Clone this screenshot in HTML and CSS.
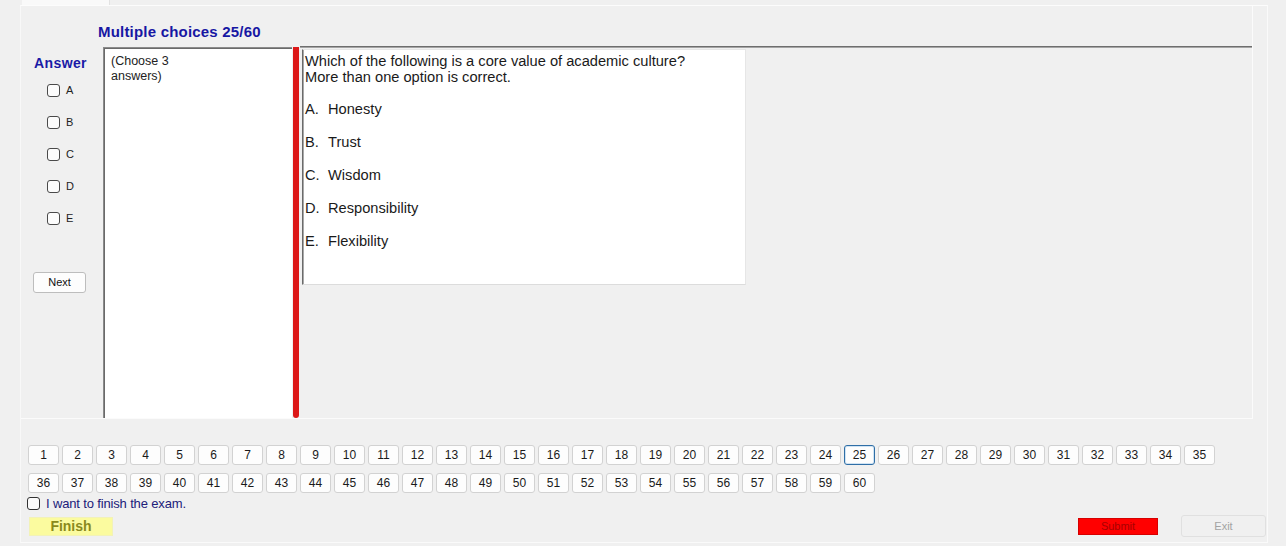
FILE: index.html
```html
<!DOCTYPE html>
<html>
<head>
<meta charset="utf-8">
<link rel="stylesheet" href="styles.css">
</head>
<body>
<div class="tabs"><div class="tab"></div></div>
<div class="page">
  <div class="group">
    <div class="title">Multiple choices 25/60</div>
    <div class="main">
      <div class="answers">
        <div class="answer-label">Answer</div>
        <div class="opt"><span class="cb"></span><span>A</span></div>
        <div class="opt"><span class="cb"></span><span>B</span></div>
        <div class="opt"><span class="cb"></span><span>C</span></div>
        <div class="opt"><span class="cb"></span><span>D</span></div>
        <div class="opt"><span class="cb"></span><span>E</span></div>
        <div class="next">Next</div>
      </div>
      <div class="choose">(Choose 3<br>answers)</div>
      <div class="redbar"></div>
      <div class="qarea">
        <div class="qbox">
          <div class="qline">Which of the following is a core value of academic culture?</div>
          <div class="qline">More than one option is correct.</div>
          <div class="option"><span class="letter">A.</span>Honesty</div>
          <div class="option"><span class="letter">B.</span>Trust</div>
          <div class="option"><span class="letter">C.</span>Wisdom</div>
          <div class="option"><span class="letter">D.</span>Responsibility</div>
          <div class="option"><span class="letter">E.</span>Flexibility</div>
        </div>
      </div>
    </div>
  </div>
  <div class="pager">
    <div class="prow">
      <div class="pb">1</div><div class="pb">2</div><div class="pb">3</div><div class="pb">4</div><div class="pb">5</div><div class="pb">6</div><div class="pb">7</div><div class="pb">8</div><div class="pb">9</div><div class="pb">10</div><div class="pb">11</div><div class="pb">12</div><div class="pb">13</div><div class="pb">14</div><div class="pb">15</div><div class="pb">16</div><div class="pb">17</div><div class="pb">18</div><div class="pb">19</div><div class="pb">20</div><div class="pb">21</div><div class="pb">22</div><div class="pb">23</div><div class="pb">24</div><div class="pb current">25</div><div class="pb">26</div><div class="pb">27</div><div class="pb">28</div><div class="pb">29</div><div class="pb">30</div><div class="pb">31</div><div class="pb">32</div><div class="pb">33</div><div class="pb">34</div><div class="pb">35</div>
    </div>
    <div class="prow">
      <div class="pb">36</div><div class="pb">37</div><div class="pb">38</div><div class="pb">39</div><div class="pb">40</div><div class="pb">41</div><div class="pb">42</div><div class="pb">43</div><div class="pb">44</div><div class="pb">45</div><div class="pb">46</div><div class="pb">47</div><div class="pb">48</div><div class="pb">49</div><div class="pb">50</div><div class="pb">51</div><div class="pb">52</div><div class="pb">53</div><div class="pb">54</div><div class="pb">55</div><div class="pb">56</div><div class="pb">57</div><div class="pb">58</div><div class="pb">59</div><div class="pb">60</div>
    </div>
  </div>
  <div class="finish-check"><span class="cb"></span><span>I want to finish the exam.</span></div>
  <div class="bottom">
    <div class="finish">Finish</div>
    <div class="spacer"></div>
    <div class="submit">Submit</div>
    <div class="exit">Exit</div>
  </div>
</div>
</body>
</html>
```

FILE: styles.css
```css
* { box-sizing: border-box; }
html, body { margin: 0; padding: 0; }
body {
  background: #f0f0f0;
  font-family: "Liberation Sans", Arial, sans-serif;
  color: #111;
  width: 1286px;
  height: 546px;
  overflow: hidden;
}
.tabs { height: 5px; }
.tab {
  margin-left: 22px;
  width: 88px;
  height: 5px;
  background: #f9f9f9;
  border-right: 1px solid #e2e2e2;
}
.page {
  margin-left: 20px;
  width: 1248px;
  height: 538px;
  border-top: 1px solid #fcfcfc;
  border-left: 1px solid #f8f8f8;
  border-right: 1px solid #fafafa;
  border-bottom: 1px solid #fafafa;
}
.group {
  width: 1232px;
  height: 413px;
  padding-top: 18px;
  border-right: 1px solid #fbfbfb;
  border-bottom: 1px solid #fbfbfb;
}
.title {
  padding-left: 77px;
  height: 16px;
  line-height: 16px;
  font-size: 15px;
  letter-spacing: 0.2px;
  font-weight: bold;
  color: #1717a3;
}
.main {
  margin-top: 6px;
  height: 372px;
  display: flex;
}
.answers {
  width: 82px;
  flex: none;
  padding-top: 9px;
}
.answer-label {
  margin-left: 13px;
  height: 16px;
  line-height: 16px;
  font-size: 14px;
  letter-spacing: 0.4px;
  font-weight: bold;
  color: #1a1aa6;
}
.opt {
  display: flex;
  align-items: center;
  gap: 6px;
  height: 32px;
  padding-left: 26px;
  font-size: 11px;
  color: #222;
}
.answer-label + .opt { margin-top: 3px; }
.cb {
  width: 13px;
  height: 13px;
  border: 1px solid #4a4a4a;
  border-radius: 3px;
  background: #fcfcfc;
  flex: none;
}
.next {
  margin-top: 38px;
  margin-left: 12px;
  width: 53px;
  height: 21px;
  border: 1px solid #bdbdbd;
  border-radius: 3px;
  background: #fdfdfd;
  font-size: 11px;
  line-height: 19px;
  text-align: center;
  color: #111;
}
.choose {
  flex: none;
  margin-top: 1px;
  width: 189px;
  height: 371px;
  background: #fff;
  border-top: 1px solid #8a8a8a;
  border-left: 1px solid #8a8a8a;
  box-shadow: inset 1px 1px 0 #6a6a6a;
  padding: 6px 0 0 7px;
  font-size: 12.5px;
  line-height: 15px;
  color: #222;
}
.redbar {
  flex: none;
  margin: 1px 1px 0 1px;
  width: 6px;
  height: 371px;
  background: #dc1818;
  border-radius: 0 0 3px 3px;
}
.qarea {
  flex: 1;
  height: 372px;
  border-top: 1px solid #6e6e6e;
  box-shadow: inset 0 1px 0 #a5a5a5;
  padding: 2px 0 0 2px;
}
.qbox {
  width: 444px;
  height: 236px;
  background: #fff;
  border-left: 1px solid #6a6a6a;
  box-shadow: inset 1px 0 0 #a8a8a8;
  border-top: 1px solid #e6e6e6;
  border-bottom: 1px solid #dcdcdc;
  border-right: 1px solid #e6e6e6;
  padding: 3px 0 0 2px;
  font-size: 14.65px;
  color: #1a1a1a;
}
.qline {
  height: 16px;
  line-height: 16px;
  white-space: nowrap;
}
.option {
  height: 16px;
  line-height: 16px;
  margin-top: 17px;
  white-space: nowrap;
}
.qline + .option { margin-top: 16px; }
.letter {
  display: inline-block;
  width: 23px;
}
.pager {
  margin-top: 26px;
  padding-left: 7px;
  display: flex;
  flex-direction: column;
  gap: 8px;
}
.prow {
  display: flex;
  gap: 3px;
}
.pb {
  width: 31px;
  height: 20px;
  border: 1px solid #d2d2d2;
  border-radius: 3px;
  background: #fdfdfd;
  font-size: 12px;
  line-height: 18px;
  text-align: center;
  color: #1a1a1a;
}
.pb.current {
  border-color: #2f6ea6;
  box-shadow: inset 0 0 0 1px #cfe3f4;
}
.finish-check {
  margin-top: 3px;
  margin-left: 6px;
  height: 14px;
  display: flex;
  align-items: center;
  gap: 6px;
  font-size: 13px;
  letter-spacing: -0.15px;
  color: #20207a;
}
.finish-check .cb {
  border-color: #333;
}
.bottom {
  margin-top: 5px;
  height: 22px;
  display: flex;
  align-items: center;
  padding-left: 8px;
}
.finish {
  width: 84px;
  height: 19px;
  background: #fbfb9f;
  border: 1px solid #f2f2b8;
  font-size: 14px;
  font-weight: bold;
  line-height: 17px;
  text-align: center;
  color: #8a8a1c;
}
.spacer { flex: 1; }
.submit {
  width: 80px;
  height: 17px;
  background: #ff0000;
  border: 1px solid #d60000;
  font-size: 11px;
  line-height: 15px;
  text-align: center;
  color: #a80000;
}
.exit {
  margin-left: 23px;
  margin-right: 1px;
  width: 85px;
  height: 22px;
  background: #f0f0f0;
  border: 1px solid #e0e0e0;
  border-radius: 3px;
  font-size: 11px;
  line-height: 20px;
  text-align: center;
  color: #a3a3a3;
}
```
